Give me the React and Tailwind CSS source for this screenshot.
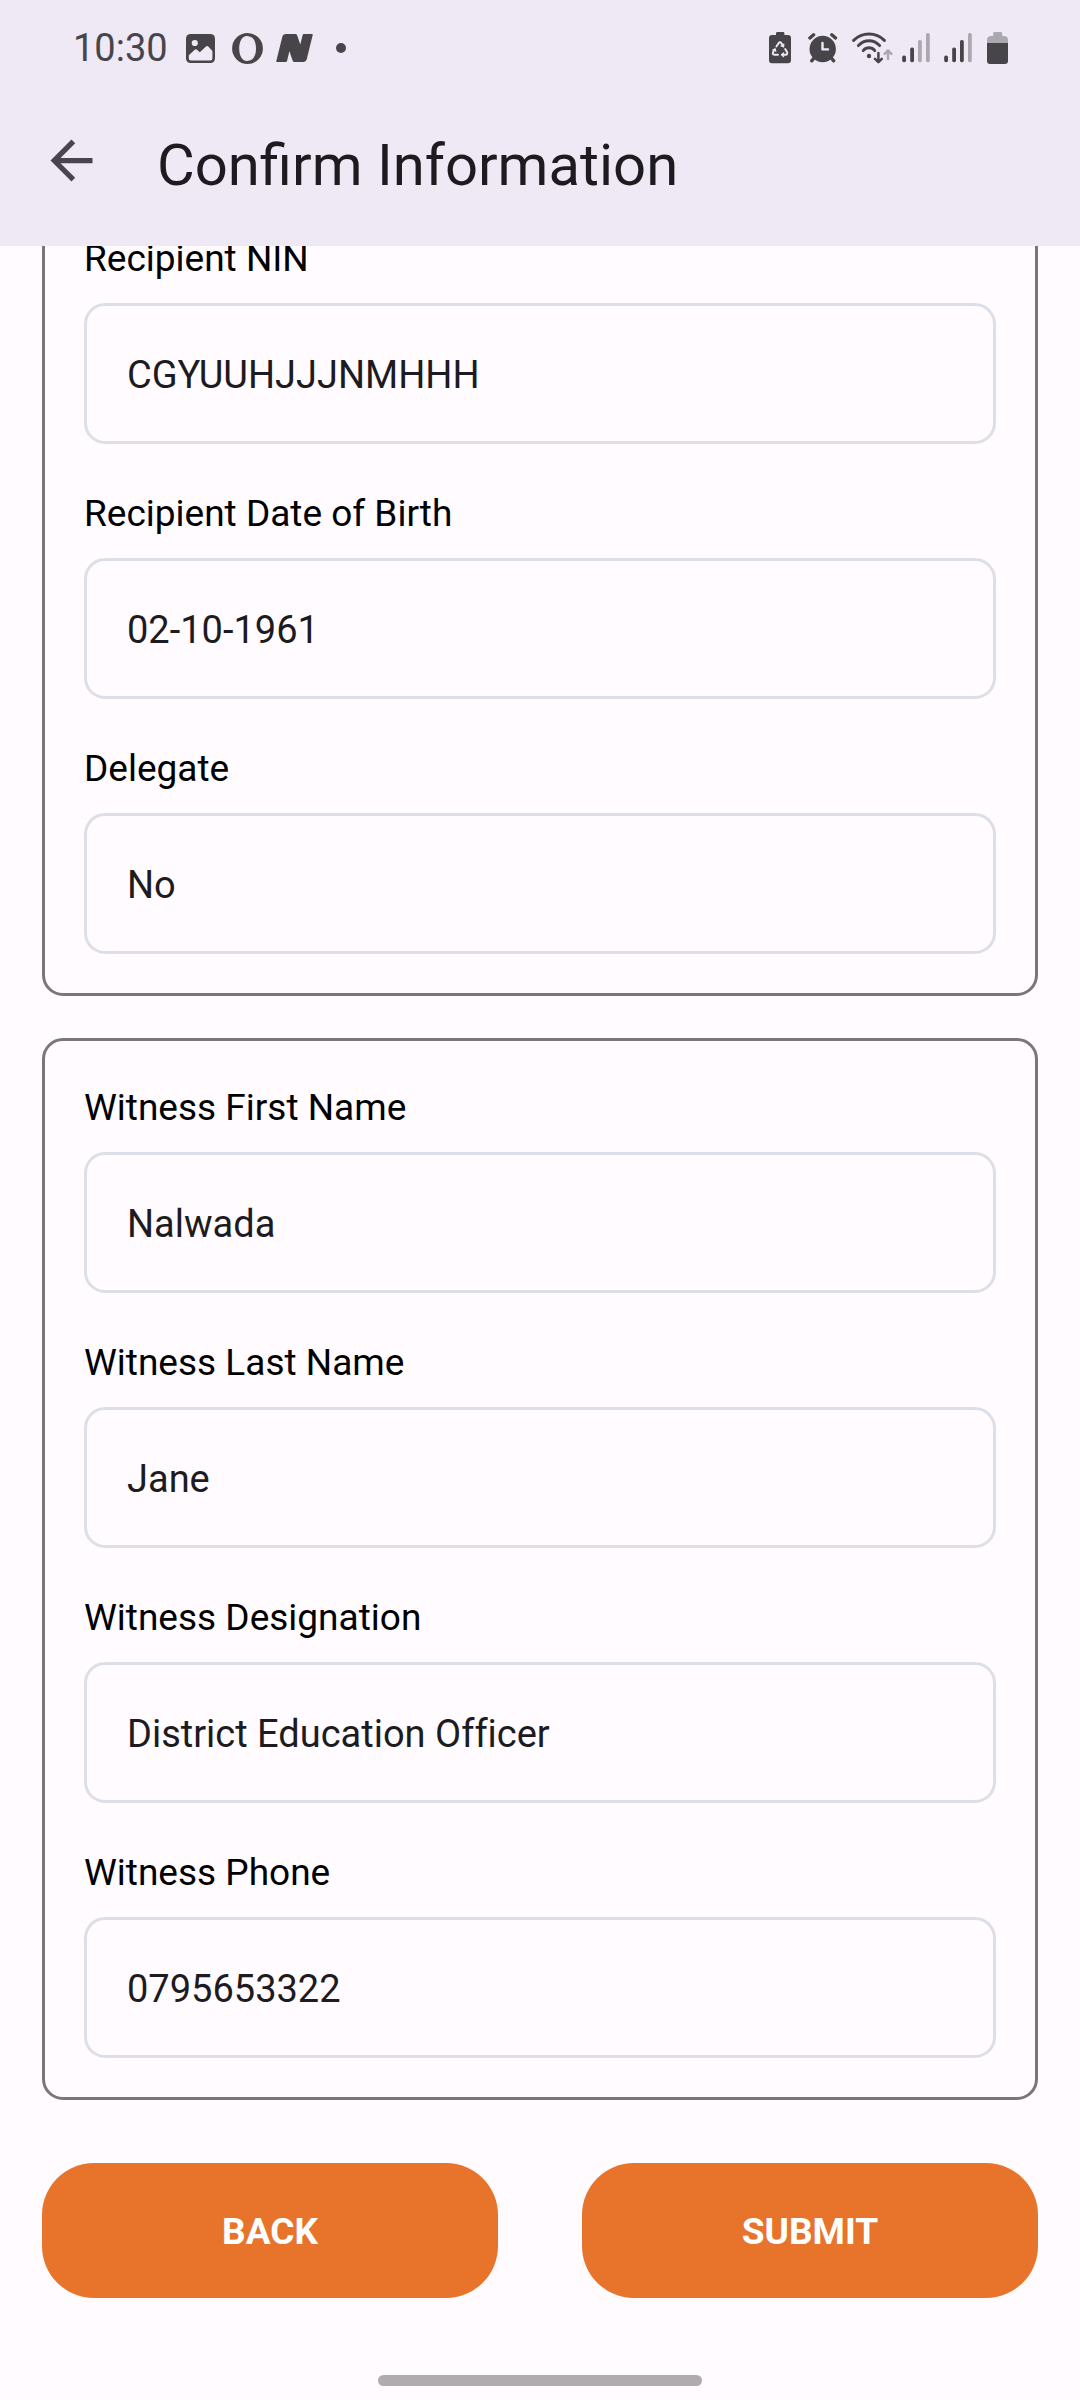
import React, { useId } from "react";

const recipientFields = [
  { label: "Recipient NIN", value: "CGYUUHJJJNMHHH" },
  { label: "Recipient Date of Birth", value: "02-10-1961" },
  { label: "Delegate", value: "No" },
];

const witnessFields = [
  { label: "Witness First Name", value: "Nalwada" },
  { label: "Witness Last Name", value: "Jane" },
  { label: "Witness Designation", value: "District Education Officer" },
  { label: "Witness Phone", value: "0795653322" },
];

function PictureIcon() {
  return (
    <svg width="36" height="32" viewBox="0 0 36 32" aria-hidden="true">
      <rect x="6" y="2" width="29" height="29" rx="4.5" fill="#47454a" />
      <circle cx="14.8" cy="11" r="3.1" fill="#efe9f5" />
      <path d="M8.8 23.2 L15 17.6 Q16 17 17 17.8 L19.8 20.3 L26 14.4 Q27.2 13.6 28.3 14.6 L32.4 19 V26.4 Q32.4 28.4 30.4 28.4 H10.8 Q8.8 28.4 8.8 26.4 Z" fill="#efe9f5" />
    </svg>
  );
}

function OperaIcon() {
  return (
    <svg width="36" height="32" viewBox="0 0 36 32" aria-hidden="true">
      <path fillRule="evenodd" d="M19.5 1 A15.4 15.5 0 1 0 19.5 32 A15.4 15.5 0 1 0 19.5 1 Z M18.8 4 C23.3 4 26.6 9 26.6 16.5 C26.6 24 23.3 29 18.8 29 C14.3 29 11.2 24 11.2 16.5 C11.2 9 14.3 4 18.8 4 Z" fill="#47454a" />
      <path d="M21 4.6 C25 4.4 28 9.4 28 16.5 C28 23.6 25 28.6 21 28.4 C24.4 26.4 26 22 26 16.5 C26 11 24.4 6.6 21 4.6 Z" fill="#efe9f5" />
    </svg>
  );
}

function NewsIcon() {
  return (
    <svg width="38" height="32" viewBox="0 0 38 32" aria-hidden="true">
      <path d="M0.8 30 Q0 30 0.3 29 L6.2 5.2 Q7 2 10 2 H19.3 Q20.7 2 21.1 3.2 L24.3 12.6 L26.6 3.2 Q26.9 2 28 2 H36 Q37 2 36.7 3 L30.8 27 Q30 30 27 30 H18.4 Q17.2 30 16.8 28.9 L13.4 19.3 L11.1 28.8 Q10.8 30 9.6 30 Z" fill="#47454a" />
    </svg>
  );
}

function DotIcon() {
  return (
    <svg width="20" height="32" viewBox="0 0 20 32" aria-hidden="true">
      <circle cx="15" cy="16" r="5" fill="#47454a" />
    </svg>
  );
}

function RecycleBatteryIcon() {
  return (
    <svg width="32" height="32" viewBox="0 0 32 32" aria-hidden="true">
      <path d="M8 3 V1.2 Q8 0 9.4 0 H15 Q16.4 0 16.4 1.2 V3 H20 Q23 3 23 6 V28.3 Q23 31.3 20 31.3 H4 Q1 31.3 1 28.3 V6 Q1 3 4 3 Z" fill="#47454a" />
      <g fill="none" stroke="#efe9f5" strokeWidth="1.9" strokeLinecap="round" strokeLinejoin="round">
        <path d="M8.4 14.6 L10.6 11.2 Q12 9.4 13.4 11.2 L15.4 14.4" />
        <path d="M17.2 17 L19 20 Q20 22.6 17.4 22.8 L14 22.8" />
        <path d="M10 22.8 L6.4 22.8 Q4.2 22.4 5 20.2 L6.8 17.2" />
        <path d="M15.8 12.2 L15.4 14.5 L13 13.9" strokeWidth="1.3" />
        <path d="M15.6 21 L13.8 22.8 L15.6 24.6" strokeWidth="1.3" />
        <path d="M4.8 18 L7 17 L7.8 19.2" strokeWidth="1.3" />
      </g>
    </svg>
  );
}

function AlarmIcon() {
  return (
    <svg width="36" height="32" viewBox="0 0 36 32" aria-hidden="true">
      <circle cx="14.7" cy="17" r="13.2" fill="#47454a" />
      <g stroke="#47454a" strokeLinecap="round" fill="none">
        <path d="M1.9 6 L5.6 2.8 M27.5 6 L23.8 2.8" strokeWidth="3.4" />
        <path d="M6.5 25.5 L3.7 28.8 M22.9 25.5 L25.7 28.8" strokeWidth="3.4" />
      </g>
      <path d="M14.5 11 V17.4 H20" fill="none" stroke="#efe9f5" strokeWidth="2.4" strokeLinecap="round" strokeLinejoin="round" />
    </svg>
  );
}

function WifiIcon() {
  return (
    <svg width="42" height="32" viewBox="0 0 42 32" aria-hidden="true" fill="none" strokeLinecap="round" strokeLinejoin="round">
      <g stroke="#47454a" strokeWidth="2.9">
        <path d="M1.6 8.4 Q8 2 17 2 Q26 2 32.4 8.4" />
        <path d="M6.4 13.6 Q11 8.8 17 8.8 Q23 8.8 27.6 13.6" />
        <path d="M11.2 18.6 Q13.6 15.8 17 15.8 Q20.4 15.8 22.8 18.6" />
      </g>
      <circle cx="17" cy="24" r="2.2" fill="#47454a" />
      <path d="M26.4 21 V29.8 M23 26.8 L26.4 30.2 L29.8 26.8" stroke="#47454a" strokeWidth="2.5" />
      <path d="M36 27 V18.6 M32.6 21.8 L36 18.4 L39.4 21.8" stroke="#aba8b0" strokeWidth="2.5" />
    </svg>
  );
}

function SignalIcon({ level }) {
  const bars = [
    { x: 0.2, top: 23.6 },
    { x: 8.2, top: 15.6 },
    { x: 16, top: 8 },
    { x: 24, top: 1 },
  ];
  return (
    <svg width="34" height="32" viewBox="0 0 34 32" aria-hidden="true">
      {bars.map((bar, i) => (
        <rect key={bar.x} x={bar.x} y={bar.top} width="3.8" height={30.2 - bar.top} rx="1.6" fill={i < level ? "#47454a" : "#aba8b0"} />
      ))}
    </svg>
  );
}

function BatteryIcon() {
  return (
    <svg width="23" height="32" viewBox="0 0 23 32" aria-hidden="true">
      <path d="M7.2 4 V1.4 Q7.2 0 8.6 0 H14.8 Q16.2 0 16.2 1.4 V4 H18.6 Q22 4.4 22 8 V11 H1 V8 Q1 4.4 4.4 4 Z" fill="#aba8b0" />
      <path d="M1 11 H22 V29 Q22 32 19 32 H4 Q1 32 1 29 Z" fill="#47454a" />
    </svg>
  );
}

function StatusBar() {
  return (
    <div className="flex h-24 items-center justify-between pr-[71px] pl-[73px]">
      <div className="flex items-center gap-3">
        <span className="text-[38px] leading-none text-[#47454a]">10:30</span>
        <PictureIcon />
        <OperaIcon />
        <NewsIcon />
        <DotIcon />
      </div>
      <div className="flex items-center gap-2">
        <RecycleBatteryIcon />
        <AlarmIcon />
        <WifiIcon />
        <SignalIcon level={2} />
        <SignalIcon level={3} />
        <BatteryIcon />
      </div>
    </div>
  );
}

function Field({ label, value }) {
  const id = useId();
  return (
    <div className="flex flex-col gap-4">
      <label htmlFor={id} className="text-[37px] leading-[56px] text-black">
        {label}
      </label>
      <input
        id={id}
        type="text"
        readOnly
        defaultValue={value}
        className="h-[141px] w-full rounded-[21px] border-3 border-[#dddfe8] bg-transparent px-10 pt-[3px] text-[38px] text-[#1d1b20] outline-none [font-variant-ligatures:none]"
      />
    </div>
  );
}

function Card({ fields }) {
  return (
    <section className="flex flex-col gap-[42px] rounded-[21px] border-3 border-[#7a767a] p-[39px]">
      {fields.map((field) => (
        <Field key={field.label} {...field} />
      ))}
    </section>
  );
}

function ActionButton({ children }) {
  return (
    <button type="button" className="h-[135px] flex-1 rounded-[52px] bg-[#e7742a] pt-[3px] text-[37px] font-bold text-white">
      {children}
    </button>
  );
}

export default function App() {
  return (
    <div className="flex min-h-screen flex-col bg-[#fffbff] font-[Roboto,sans-serif]">
      <header className="relative z-10 bg-[#efe9f5]">
        <StatusBar />
        <div className="flex items-start gap-[54px] px-[39px] pt-8 pb-11">
          <button type="button" aria-label="Go back" className="flex size-16 items-center justify-center">
            <svg width="63" height="63" viewBox="0 0 24 24" fill="#49454f" aria-hidden="true">
              <path d="M20 11H7.83l5.59-5.59L12 4l-8 8 8 8 1.41-1.41L7.83 13H20v-2z" />
            </svg>
          </button>
          <h1 className="text-[58px] leading-[74px] text-[#1d1b20]">Confirm Information</h1>
        </div>
      </header>

      {/* The form is scrolled, so its top edge sits beneath the app bar. */}
      <main className="-mt-[57px] flex flex-col gap-[42px] px-[42px]">
        <Card fields={recipientFields} />
        <Card fields={witnessFields} />
        <div className="flex gap-[84px] pt-[21px]">
          <ActionButton>BACK</ActionButton>
          <ActionButton>SUBMIT</ActionButton>
        </div>
      </main>

      <div className="mt-auto flex justify-center pt-10 pb-[14px]">
        <div className="h-[11px] w-[30%] rounded-full bg-[#aeacae]" />
      </div>
    </div>
  );
}
